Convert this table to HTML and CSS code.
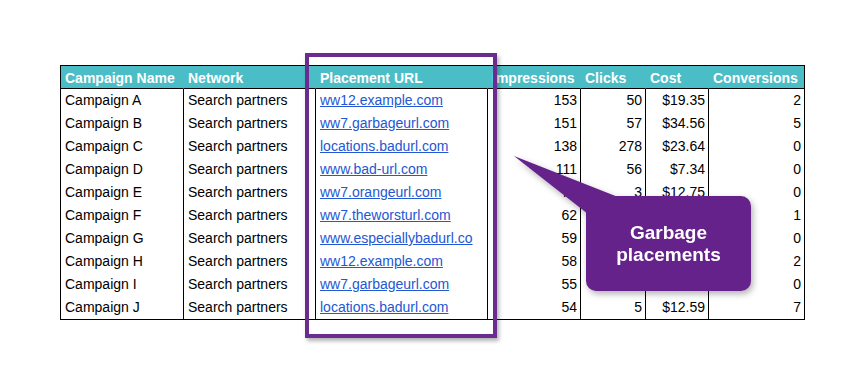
FILE: index.html
```html
<!DOCTYPE html>
<html>
<head>
<meta charset="utf-8">
<link rel="stylesheet" href="styles.css">
</head>
<body>
<div class="page">
  <table class="sheet">
    <thead>
      <tr>
        <th class="c1">Campaign Name</th>
        <th class="c2">Network</th>
        <th class="c3">Placement URL</th>
        <th class="c4">Impressions</th>
        <th class="c5">Clicks</th>
        <th class="c6">Cost</th>
        <th class="c7">Conversions</th>
      </tr>
    </thead>
    <tbody>
      <tr><td>Campaign A</td><td>Search partners</td><td><a href="#">ww12.example.com</a></td><td class="num">153</td><td class="num">50</td><td class="num">$19.35</td><td class="num">2</td></tr>
      <tr><td>Campaign B</td><td>Search partners</td><td><a href="#">ww7.garbageurl.com</a></td><td class="num">151</td><td class="num">57</td><td class="num">$34.56</td><td class="num">5</td></tr>
      <tr><td>Campaign C</td><td>Search partners</td><td><a href="#">locations.badurl.com</a></td><td class="num">138</td><td class="num">278</td><td class="num">$23.64</td><td class="num">0</td></tr>
      <tr><td>Campaign D</td><td>Search partners</td><td><a href="#">www.bad-url.com</a></td><td class="num">111</td><td class="num">56</td><td class="num">$7.34</td><td class="num">0</td></tr>
      <tr><td>Campaign E</td><td>Search partners</td><td><a href="#">ww7.orangeurl.com</a></td><td class="num">77</td><td class="num">3</td><td class="num">$12.75</td><td class="num">0</td></tr>
      <tr><td>Campaign F</td><td>Search partners</td><td><a href="#">ww7.theworsturl.com</a></td><td class="num">62</td><td class="num"></td><td class="num"></td><td class="num">1</td></tr>
      <tr><td>Campaign G</td><td>Search partners</td><td><a href="#">www.especiallybadurl.co</a></td><td class="num">59</td><td class="num"></td><td class="num"></td><td class="num">0</td></tr>
      <tr><td>Campaign H</td><td>Search partners</td><td><a href="#">ww12.example.com</a></td><td class="num">58</td><td class="num"></td><td class="num"></td><td class="num">2</td></tr>
      <tr><td>Campaign I</td><td>Search partners</td><td><a href="#">ww7.garbageurl.com</a></td><td class="num">55</td><td class="num"></td><td class="num"></td><td class="num">0</td></tr>
      <tr><td>Campaign J</td><td>Search partners</td><td><a href="#">locations.badurl.com</a></td><td class="num">54</td><td class="num">5</td><td class="num">$12.59</td><td class="num">7</td></tr>
    </tbody>
  </table>

  <div class="highlight"></div>

  <div class="callout">
    <svg class="tail" width="110" height="62" viewBox="0 0 110 62">
      <polygon points="1,1 105,42 97,61 75,59" fill="#66228B"/>
    </svg>
    <div class="callout-text">Garbage<br>placements</div>
  </div>
</div>
</body>
</html>
```

FILE: styles.css
```css
* {
  box-sizing: border-box;
}

html, body {
  margin: 0;
  padding: 0;
  background: #ffffff;
}

.page {
  position: relative;
  width: 868px;
  height: 392px;
  padding: 65px 0 0 60px;
  font-family: "Liberation Sans", Arial, sans-serif;
  overflow: hidden;
}

.sheet {
  width: 745px;
  table-layout: fixed;
  border-collapse: separate;
  border-spacing: 0;
  border: 1px solid #000;
  font-size: 14px;
  color: #000;
}

.sheet th {
  background: #4BBDC6;
  color: #ffffff;
  font-weight: bold;
  text-align: left;
  white-space: nowrap;
  overflow: hidden;
  padding: 2px 0 0 4px;
  height: 23px;
  line-height: 20px;
  border-bottom: 1px solid #000;
  border-left: 1px solid #4BBDC6;
}

.sheet th.c1 { width: 122px; border-left: none; }
.sheet th.c2 { width: 132px; }
.sheet th.c3 { width: 172px; }
.sheet th.c4 { width: 93px; }
.sheet th.c5 { width: 65px; }
.sheet th.c6 { width: 63px; }
.sheet th.c7 { width: 96px; }

.sheet td {
  padding: 0 3px 0 4px;
  height: 23px;
  line-height: 23px;
  white-space: nowrap;
  overflow: hidden;
  border-left: 1px solid #000;
}

.sheet td:first-child {
  border-left: none;
}

.sheet td.num {
  text-align: right;
}

.sheet a {
  color: #2357D3;
  text-decoration: underline;
}

.highlight {
  position: absolute;
  left: 305px;
  top: 53px;
  width: 192px;
  height: 285px;
  border: 4px solid #6B2C90;
  box-shadow: 2px 3px 4px rgba(0, 0, 0, 0.3);
}

.callout {
  position: absolute;
  left: 586px;
  top: 196px;
  width: 165px;
  height: 95px;
  border-radius: 10px;
  background: #66228B;
  display: flex;
  align-items: center;
  justify-content: center;
  filter: drop-shadow(2px 3px 3px rgba(0, 0, 0, 0.3));
}

.tail {
  position: absolute;
  left: -73px;
  top: -41px;
  display: block;
}

.callout-text {
  position: relative;
  color: #ffffff;
  font-weight: bold;
  font-size: 19px;
  line-height: 22px;
  text-align: center;
}
```
